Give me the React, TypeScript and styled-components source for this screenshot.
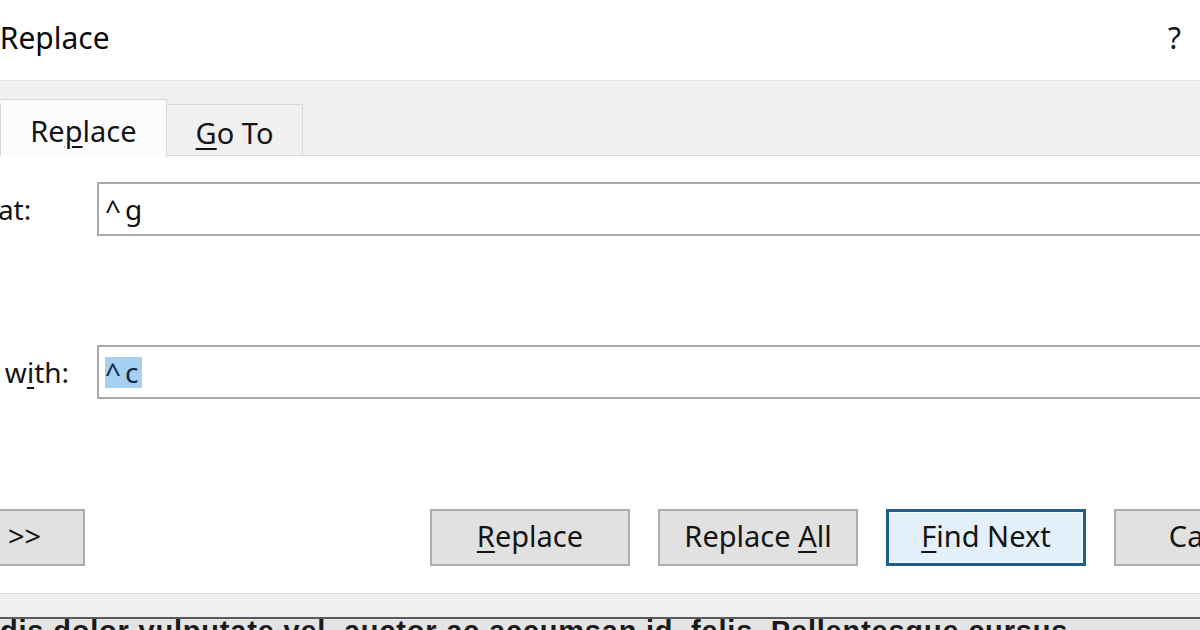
import React from 'react'
import styled, { createGlobalStyle } from 'styled-components'

const GlobalStyle = createGlobalStyle`
  html, body {
    margin: 0;
    padding: 0;
    background: #fff;
    overflow: hidden;
  }
  body {
    font-family: 'Noto Sans', 'Open Sans', sans-serif;
    color: #111;
  }
`

const Window = styled.div`
  width: 1200px;
  height: 630px;
  overflow: hidden;
  display: flex;
  flex-direction: column;
  background: #fff;
`

const TitleBar = styled.div`
  height: 80px;
  flex: none;
  box-sizing: border-box;
  padding-top: 18px;
  display: flex;
  justify-content: space-between;
  align-items: flex-start;
`

const Title = styled.h1`
  margin: 0 0 0 -130px;
  font-size: 30px;
  font-weight: 400;
  line-height: 40px;
  white-space: nowrap;
  color: #0c0c0c;
`

const Help = styled.span`
  margin-right: 19px;
  font-size: 30px;
  line-height: 40px;
  color: #111;
`

const TabStrip = styled.div`
  height: 76px;
  flex: none;
  box-sizing: border-box;
  background: #f0f0f0;
  border-top: 1px solid #e4e4e4;
  border-bottom: 1px solid #d6d6d6;
  display: flex;
  align-items: flex-end;
`

const TabList = styled.div`
  display: flex;
  align-items: flex-end;
  margin-left: -117px;
`

const Tab = styled.div<{ $active?: boolean }>`
  box-sizing: border-box;
  height: ${p => (p.$active ? 58 : 51)}px;
  margin-bottom: ${p => (p.$active ? -2 : 0)}px;
  padding: ${p => (p.$active ? 11 : 8)}px 29px 0;
  font-size: 29px;
  white-space: nowrap;
  background: ${p => (p.$active ? '#fcfcfc' : '#f0f0f0')};
  border: 1px solid #d9d9d9;
  border-bottom: none;
  color: #151515;
  & + & {
    border-left: none;
  }
`

const Key = styled.span`
  text-decoration: underline;
  text-decoration-thickness: 2px;
  text-underline-offset: 4px;
`

const Form = styled.div`
  display: grid;
  grid-template-columns: 202px 1fr;
  row-gap: 109px;
  align-items: center;
  margin: 26px -40px 0 -105px;
`

const Label = styled.label`
  font-size: 28px;
  white-space: nowrap;
  color: #151515;
`

const Field = styled.div`
  height: 54px;
  box-sizing: border-box;
  border: 2px solid #a9a9a9;
  background: #fff;
  padding-left: 6px;
  display: flex;
  align-items: center;
  font-size: 28px;
  letter-spacing: 4px;
  color: #111;
`

const Selected = styled.span`
  display: inline-block;
  line-height: 31px;
  background: #a6d0f1;
  color: #0d2a45;
`

const ButtonRow = styled.div`
  display: flex;
  gap: 28px;
  margin: 110px -114px 0 -115px;
`

const Button = styled.button<{ $default?: boolean }>`
  flex: none;
  width: 200px;
  height: 57px;
  box-sizing: border-box;
  padding: 0 0 5px;
  font-family: 'Noto Sans', 'Open Sans', sans-serif;
  font-size: 29px;
  color: #141414;
  white-space: nowrap;
  background: ${p => (p.$default ? '#e3f0fa' : '#e1e1e1')};
  border: ${p => (p.$default ? '3px solid #1f5e8a' : '2px solid #adadad')};
  box-shadow: ${p => (p.$default ? 'inset 0 0 0 1px #f4fbff' : 'none')};
`

const MoreButton = styled(Button)`
  margin-right: auto;
`

const Footer = styled.div`
  margin-top: 27px;
  height: 26px;
  flex: none;
  box-sizing: border-box;
  background: #efefef;
  border-top: 1px solid #dcdcdc;
  border-bottom: 2px solid #5a5a5a;
`

const DocLine = styled.div`
  flex: 1;
  overflow: hidden;
  background: #e4e4e4;
  font-family: 'Liberation Sans', Arial, sans-serif;
  font-size: 29px;
  font-weight: 700;
  line-height: 24px;
  letter-spacing: 0.8px;
  white-space: nowrap;
  color: #1a1a1a;
`

export default function App() {
  return (
    <>
      <GlobalStyle />
      <Window>
        <TitleBar>
          <Title>Find and Replace</Title>
          <Help>?</Help>
        </TitleBar>

        <TabStrip>
          <TabList>
            <Tab>Fin<Key>d</Key></Tab>
            <Tab $active>Re<Key>p</Key>lace</Tab>
            <Tab><Key>G</Key>o To</Tab>
          </TabList>
        </TabStrip>

        <Form>
          <Label>Fi<Key>n</Key>d what:</Label>
          <Field>^g</Field>
          <Label>Replace w<Key>i</Key>th:</Label>
          <Field><Selected>^c</Selected></Field>
        </Form>

        <ButtonRow>
          <MoreButton><Key>M</Key>ore &gt;&gt;</MoreButton>
          <Button><Key>R</Key>eplace</Button>
          <Button>Replace <Key>A</Key>ll</Button>
          <Button $default><Key>F</Key>ind Next</Button>
          <Button>Cancel</Button>
        </ButtonRow>

        <Footer />
        <DocLine>dis dolor vulputate vel, auctor ac accumsan id, felis. Pellentesque cursus</DocLine>
      </Window>
    </>
  )
}
